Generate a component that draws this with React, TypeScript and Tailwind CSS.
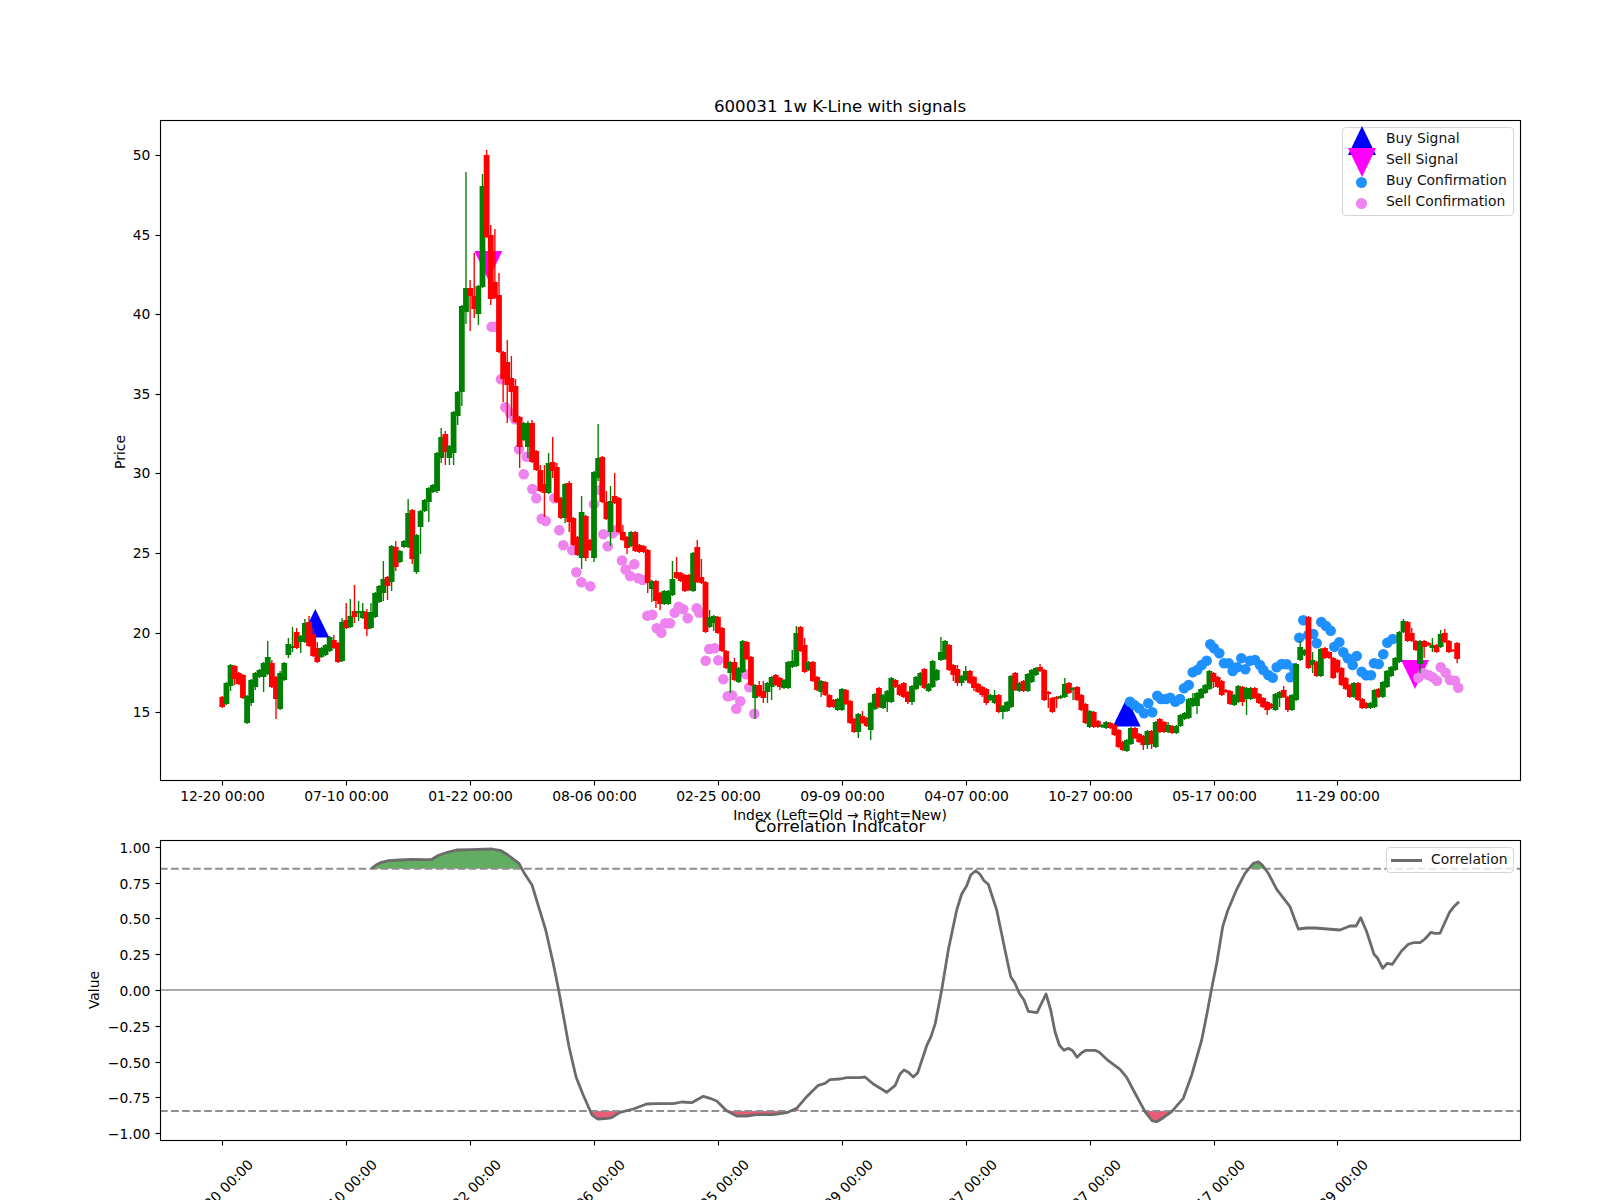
type Candle = { up: boolean; top: number; bot: number; hi: number; lo: number };

// all candle / curve numbers are page pixels
const g = (top: number, bot: number, hi = 0, lo = 0): Candle => ({ up: true, top, bot, hi: hi || top - 1, lo: lo || bot + 1 });
const r = (top: number, bot: number, hi = 0, lo = 0): Candle => ({ up: false, top, bot, hi: hi || top - 1, lo: lo || bot + 1 });

const candles: Candle[] = [
  // 12-20
  r(697,707,696,708), g(683,704), g(665,686,0,691), r(666,679,0,685), r(673,684), r(675,698,674,699), g(696,723), g(680,703,0,706), g(673,687,0,690), g(670,677),
  g(663,677,0,692), g(657,674,641), r(663,687,660), r(677,699,0,719), g(673,709,671,710), g(663,680), g(644,655,638,658), g(646,648,627,652), r(632,648,628,649), g(636,642,0,653),
  g(623,642,619), r(622,646,616,647), r(634,656,628), r(648,662,642,663), g(648,657), g(645,655), g(637,651), r(640,648,635), r(643,662), g(622,661,618,662),
  // 07-10
  r(620,628,603), g(616,627,599), r(611,617,585,623), g(611,613,601,621), g(611,618,603), r(612,629,609,636), g(612,628,603), g(593,617), g(586,602), g(579,593,561,601),
  r(577,586,0,600), g(546,582,0,591), r(547,567,541,571), g(551,562), g(541,547), g(513,547,499), r(510,559,0,564), g(535,572,0,574), g(511,527,0,554), g(500,511),
  g(488,502,0,522), g(485,492), g(453,491,0,493), g(437,458,428,463), r(434,452,431,465), g(446,458,0,465), g(412,453,0,465), g(392,416,0,425), g(306,392,0,406), g(288,312,172,324),
  // 01-22
  r(288,296,280,331), r(296,309,253,318), g(286,314,0,325), g(186,287,174), r(155,237,150), r(235,299,225,305), r(282,298,229), r(295,352,273), r(352,379,0,402), r(362,385,340,423),
  r(378,392,356,416), r(386,422,379), r(417,447,0,468), g(423,440), g(423,447,421,458), r(423,462,420), r(451,470), r(470,491,465), r(484,493,465,517), g(463,493,453),
  r(462,471,437,478), r(467,502,463), r(498,518), g(484,518,0,523), r(483,522,481,532), r(518,545), r(537,555), g(512,558,496,569), r(516,558,0,561), r(540,550),
  // 08-06
  g(472,558,0,562), g(458,478,424,481), r(457,502), r(502,519,491), g(501,532,486,546), r(496,503,473), r(498,532), r(532,540,525), r(537,548,0,554), g(532,546),
  r(532,551), r(545,552,0,553), r(546,552), r(550,583,0,593), g(581,589,0,602), r(581,601,0,608), r(593,604,0,610), g(591,604), g(591,604), g(579,595,561),
  r(572,578,557), r(573,581), r(575,591), r(575,590), g(553,591), r(547,582,540), r(577,583,559), r(582,632), g(617,627,610), g(616,623,0,631),
  // 02-25
  r(617,633), r(628,651), r(651,668), g(662,673,0,693), r(662,680,658), g(668,682), g(641,672), r(642,659), r(657,685), g(685,698,0,719),
  r(685,696,681), r(691,698,681,703), g(683,692,0,703), g(677,687,0,700), r(675,685), r(678,687,0,690), g(680,688), g(662,688), g(661,667,650), g(633,666,626),
  r(627,651), r(645,672,638), g(662,670), r(662,681), r(677,690), g(681,692,0,697), r(682,695), r(695,707), r(700,707), g(699,710),
  // 09-09
  g(689,710), r(690,704), r(701,723), r(719,732), g(714,732,0,738), r(716,723,711), r(718,726), g(703,730,0,740), g(694,709), r(688,707),
  g(695,708), g(691,702,0,712), g(678,702), r(680,687), r(685,695), r(683,697), r(692,702,0,704), g(686,702,0,705), g(677,689), g(673,685),
  r(669,688), g(684,691), g(661,687), g(670,680), g(652,660,637), g(641,659), r(645,670), r(665,675,0,681), r(669,683,665,686), g(676,683,0,686),
  // 04-07
  g(671,680,666), r(671,683), r(677,688,0,691), r(684,692), r(687,695,0,697), r(689,703,0,705), g(695,700), g(695,703,690), r(695,712), g(706,712,0,719),
  g(702,711), g(676,707), r(673,690), g(683,691), r(681,691), g(674,691), g(670,682), g(668,675), r(667,671,664), r(670,700),
  r(692,694,0,708), r(698,712), r(697,699,0,708), g(696,698), g(684,697,678,698), r(683,693), g(688,690,687,700), r(687,700), r(695,710), r(704,723),
  // 10-27
  g(711,727), r(712,727), r(721,727), g(725,727,724,728), g(722,728), r(723,728), r(725,735), r(730,747), r(742,750,0,751), g(740,751),
  g(728,744), r(728,738), r(734,742), r(736,745,0,750), g(731,745,0,749), r(731,744,0,749), g(722,747,0,748), r(719,732), r(722,732,0,733), g(725,732,722),
  r(726,733), g(726,733), g(715,726), g(713,719), g(699,718), g(698,706,693), g(693,706,0,714), g(689,698), g(685,693), g(671,689),
  // 05-17
  r(673,682,0,688), r(677,687), r(681,695), r(690,692), r(691,704), g(695,705), g(686,702), r(687,702,0,706), g(688,699,0,715), g(688,699),
  r(688,698), r(694,703), r(698,707), r(702,710,0,715), r(704,708), g(694,710), g(692,698,0,707), r(690,697,686), r(697,710,0,712), g(695,710),
  g(664,700), g(647,660,641), g(650,655), r(617,668), g(660,665,652,673), r(662,676), g(649,676), r(648,658), r(652,658), r(658,678),
  // 11-29
  r(660,672), r(668,685), r(678,689), r(685,697), g(683,697), r(683,700), r(699,708), r(703,708), g(703,708), g(690,707),
  r(689,697), g(682,697), g(671,687), g(667,676), g(658,670), g(632,662), g(621,632,619), r(622,641), r(633,641,628), r(641,650),
  g(641,664,0,673), r(641,647,0,658), r(643,645), g(645,648,638,652), r(645,652), g(634,647,630), r(633,642,629), r(641,652), r(650,651), r(643,659,0,663),
];

const candleX = (i: number) => 222.3 + i * 4.13;
const tickX = (i: number) => Math.round(candleX(i * 30)) + 0.5;

const tickLabels = ["12-20 00:00", "07-10 00:00", "01-22 00:00", "08-06 00:00", "02-25 00:00", "09-09 00:00", "04-07 00:00", "10-27 00:00", "05-17 00:00", "11-29 00:00"];
const priceTicks = [15, 20, 25, 30, 35, 40, 45, 50];
const valueTicks = ["1.00", "0.75", "0.50", "0.25", "0.00", "−0.25", "−0.50", "−0.75", "−1.00"];

const sellDots = [
  [491.7,326.7],[495,326.7],[501,379.3],[505.3,407.3],[510,413.3],[515,419.3],[519,449.3],[526.7,456.7],[523.7,474.3],[532.3,489],[536.3,498.3],[541.7,518.7],[545.7,521],[554.3,498.3],[559.3,530.3],[563.3,545.3],[572.3,550.3],[576.3,572.3],[581.3,582.3],[590.3,586.3],[594,504.3],[600,490],[603.3,534.3],[607.7,546.3],[612.7,533.3],[616.7,530],[622,560.5],[625.7,569.5],[630,576],[634.3,564.3],[638.3,578.3],[642.7,580],
  [647.3,615.7],[652.3,614.7],[656.7,628.3],[661.3,632.7],[665.3,623.3],[670,623.3],[674.7,612.7],[678.7,606.7],[683.3,609.3],[687.7,618.3],[696.7,608.3],[699.3,612.7],[705.7,660.7],[709.3,649],[714.7,648.3],[718.3,660.3],[723.3,679.3],[727.7,696.3],[732,695.3],[736.3,708.7],[740.3,701.3],[746,674.3],[749.3,687.3],[754.3,713.7],
  [1418.3,677.7],[1423.3,673.3],[1428.3,675],[1432.7,677.3],[1437,680.7],[1440.7,667.3],[1445.7,672.7],[1450,680],[1455,680.7],[1458.3,687.7],
];

const buyDots = [
  [1130,701.7],[1134.3,705],[1139,708.3],[1144,713.3],[1148.3,703.3],[1152.3,712.3],[1157.3,695.7],[1161,699],[1166,699],[1170.3,697.7],[1175.3,701.7],[1180,699],[1184,688.3],[1188.7,685],[1192.7,672.3],[1197.3,670],[1201.7,665],[1206.7,660.7],[1210.3,644.3],[1214,648.3],[1219.3,653.3],[1224,663.3],[1228.7,663.3],[1232.7,671],[1237,667.3],[1241.3,658.3],[1245.3,669.3],[1250,660.7],[1255,660],[1260,665],[1263.3,670],[1268.3,675],[1272.7,677.7],[1276.7,667.3],[1281.7,664],[1286.7,664.3],[1290.3,677.3],[1294,668.3],[1299.3,637.7],[1303.3,620.3],[1308.3,635],[1313.3,634],[1316.7,643.3],[1321.3,622],[1326,626],[1330.7,630.7],[1334.3,646.7],[1339.3,642.3],[1343.3,652.3],[1347.7,658.3],[1352.7,665],[1356.7,656],[1361.7,671.7],[1366,675.3],[1371,675.3],[1374,663.3],[1378.7,664],[1383.3,654.3],[1387.3,642.7],[1392.7,639],
];

const curve: [number, number][] = [
  [371.4,868.7],[376,865],[381.4,862.3],[388.6,860.7],[399.3,860],[411.8,859.3],[424.3,859.7],[432,859.3],[438.6,855.3],[447.5,852.3],[456.4,850],[470.7,849.7],[492,849],[501,850.7],[508,855],[519,863.3],[524.3,873.3],[532,885],[538.6,906.7],[545.7,930],[552.9,961.7],[558,986.7],[563.6,1016.7],[569,1046.7],[576,1076.7],[583.2,1095],[592,1115],[597.5,1119],[608,1118.3],[611.7,1117.7],[620,1112.3],[633.3,1109],[646.7,1104],[656.7,1103.7],[673.3,1103.7],[681.7,1102],[691.7,1102.7],[703.3,1096.3],[710,1098.3],[716.7,1101],[726.7,1110.7],[736.7,1116],[746.7,1116],[756.7,1114.7],[773.3,1114.7],[786.7,1112.7],[796.7,1108.3],[806.7,1096.7],[818.3,1085.3],[825,1083.3],[830,1079.7],[840,1079],[846.7,1077.7],[860,1077.7],[865,1077],[873.3,1084],[886.7,1092.3],[895,1085.7],[900,1074],[904,1070],[908.3,1072.3],[913.3,1077],[917.7,1072.7],[926.7,1045.7],[931,1036.7],[935.3,1023.3],[941.7,990],[948.3,950],[956.7,910],[961.7,894],[966.7,885.7],[970.7,875],[975.7,870.7],[980,874.3],[984,880.7],[988.3,884.3],[996.7,910],[1005,950],[1010.7,976.7],[1015,983.3],[1019.3,993.3],[1024,1000],[1028.3,1011.3],[1037,1012.7],[1046,994],[1050.7,1010],[1055,1031.7],[1059.3,1045],[1064,1050.3],[1068.3,1048.3],[1072.7,1050.7],[1077,1057.3],[1081.7,1052.7],[1086,1050.3],[1095,1050.3],[1099.3,1052.3],[1108.3,1060.7],[1120,1069.3],[1126.7,1077.3],[1133.3,1090],[1145,1111.7],[1152.3,1121],[1156.7,1121.7],[1163.3,1117.7],[1171.7,1111.7],[1183.3,1098.3],[1191.7,1075],[1201.7,1040],[1206.7,1015],[1211.7,988.3],[1216.7,963.3],[1222.7,926.7],[1227.7,910.7],[1236.7,889.3],[1245,873.3],[1253.3,863.3],[1258.3,861.7],[1262.3,865],[1268.3,873.3],[1276.7,889.3],[1290,906.7],[1298.3,929],[1306.7,928],[1315,928],[1340,930],[1350,926],[1356,926],[1360.7,917.7],[1366.7,931.7],[1374,954.3],[1377.7,958.3],[1382.7,968.3],[1387.3,963.3],[1392.3,964.3],[1401.7,950.7],[1408.3,944.3],[1413.3,942.7],[1420,942.7],[1425,939],[1431,932.3],[1435,933.3],[1440,933.3],[1449.3,912.7],[1453.3,907.3],[1459,901.7],
];

const pts = (list: number[][]) => list.map((p) => p.join(",")).join(" ");

// closed area between the curve and a threshold, for one x range
function area(x0: number, x1: number, level: number) {
  const inside = curve.filter((p) => p[0] >= x0 && p[0] <= x1);
  return pts([[x0, level], ...inside, [x1, level]]);
}

function Triangle({ x, y, down, color }: { x: number; y: number; down?: boolean; color: string }) {
  const p = down
    ? [[x - 14, y], [x + 14, y], [x, y + 29]]
    : [[x, y], [x + 14, y + 28.5], [x - 14, y + 28.5]];
  return <polygon points={pts(p)} fill={color} />;
}

function PriceChart() {
  return (
    <svg viewBox="0 0 1600 800" className="block h-[800px] w-[1600px] overflow-visible">
      <text x={840} y={111.5} textAnchor="middle" className="text-[16.67px]">600031 1w K-Line with signals</text>

      <Triangle x={315.3} y={609} color="#0000ff" />
      <Triangle x={1126.7} y={698} color="#0000ff" />
      <Triangle x={488.3} y={251} down color="#ff00ff" />
      <Triangle x={1415} y={660} down color="#ff00ff" />

      {buyDots.map((d, i) => <circle key={i} cx={d[0]} cy={d[1]} r={5.3} fill="#1e90ff" />)}
      {sellDots.map((d, i) => <circle key={i} cx={d[0]} cy={d[1]} r={5.3} fill="#ee82ee" />)}

      {candles.map((c, i) => {
        const x = candleX(i);
        const color = c.up ? "#008000" : "#ff0000";
        return (
          <g key={i} stroke={color}>
            <line x1={x} x2={x} y1={c.hi} y2={c.lo} strokeWidth={1.39} />
            <line x1={x} x2={x} y1={c.top} y2={c.bot} strokeWidth={5.8} />
          </g>
        );
      })}

      <rect x={160.5} y={120.5} width={1360} height={660} fill="none" stroke="#000" strokeWidth={1.11} />

      {priceTicks.map((p) => {
        const y = Math.round(155 + (50 - p) * 15.92) + 0.5;
        return (
          <g key={p}>
            <line x1={155.5} x2={160} y1={y} y2={y} stroke="#000" strokeWidth={1.11} />
            <text x={150.3} y={y + 4.7} textAnchor="end" className="text-[13.89px]">{p}</text>
          </g>
        );
      })}
      {tickLabels.map((t, i) => {
        const x = tickX(i);
        return (
          <g key={t}>
            <line x1={x} x2={x} y1={781} y2={785.5} stroke="#000" strokeWidth={1.11} />
            <text x={x} y={801} textAnchor="middle" className="text-[13.89px]">{t}</text>
          </g>
        );
      })}
      <text x={840} y={820} textAnchor="middle" className="text-[13.89px]">Index (Left=Old → Right=New)</text>
      <text transform="translate(125 452) rotate(-90)" textAnchor="middle" className="text-[13.89px]">Price</text>
    </svg>
  );
}

function CorrelationChart() {
  return (
    <svg viewBox="0 800 1600 400" className="block h-[400px] w-[1600px]">
      <text x={840} y={831.7} textAnchor="middle" className="text-[16.67px]">Correlation Indicator</text>

      <polygon points={area(371.4, 521, 868.7)} fill="#62ad62" />
      <polygon points={area(1248.5, 1266.8, 868.7)} fill="#62ad62" />
      <polygon points={area(590, 622, 1111)} fill="#e75c77" />
      <polygon points={area(726, 800, 1111)} fill="#e75c77" />
      <polygon points={area(1144.5, 1171.7, 1111)} fill="#e75c77" />

      <line x1={160} x2={1520} y1={990} y2={990} stroke="#aaaaaa" strokeWidth={2} />
      <line x1={160} x2={1520} y1={868.7} y2={868.7} stroke="#8f8f8f" strokeWidth={2.08} strokeDasharray="7.7 3.33" />
      <line x1={160} x2={1520} y1={1111} y2={1111} stroke="#8f8f8f" strokeWidth={2.08} strokeDasharray="7.7 3.33" />
      <polyline points={pts(curve)} fill="none" stroke="#6b6b6b" strokeWidth={2.78} strokeLinejoin="round" />

      <rect x={160.5} y={840.5} width={1360} height={300} fill="none" stroke="#000" strokeWidth={1.11} />

      {valueTicks.map((v, i) => {
        const y = Math.round(846.8 + i * 35.8) + 0.5;
        return (
          <g key={v}>
            <line x1={155.5} x2={160} y1={y} y2={y} stroke="#000" strokeWidth={1.11} />
            <text x={150.3} y={y + 5} textAnchor="end" className="text-[13.89px]">{v}</text>
          </g>
        );
      })}
      {tickLabels.map((t, i) => {
        const x = tickX(i);
        return (
          <g key={t}>
            <line x1={x} x2={x} y1={1141} y2={1145.5} stroke="#000" strokeWidth={1.11} />
            <text transform={`translate(${x - 2} 1192) rotate(-45)`} y={5} textAnchor="middle" className="text-[13.89px]">{t}</text>
          </g>
        );
      })}
      <text transform="translate(99 990) rotate(-90)" textAnchor="middle" className="text-[13.89px]">Value</text>
    </svg>
  );
}

function LegendRow({ label, marker }: { label: string; marker: React.ReactNode }) {
  return (
    <div className="flex h-[21px] items-center">
      <div className="mt-[4px] flex h-[21px] w-[37px] items-center justify-center">{marker}</div>
      <span className="ml-[6px] whitespace-nowrap">{label}</span>
    </div>
  );
}

function TriangleMarker({ down, color }: { down?: boolean; color: string }) {
  return (
    <svg width="30" height="30" viewBox="0 0 30 30" className="shrink-0 overflow-visible">
      <polygon points={down ? "1,1 29,1 15,30" : "15,0 29,29 1,29"} fill={color} />
    </svg>
  );
}

export default function App() {
  return (
    <div className="h-[1200px] w-[1600px] overflow-hidden bg-white font-['DejaVu_Sans',sans-serif] text-[13.89px] leading-none text-black">
      <section className="relative h-[800px]">
        <PriceChart />
        <div className="absolute left-[1342px] top-[127px] h-[89px] w-[172px] rounded-[4px] border border-[#d5d5d5] bg-white/80 text-[#111]">
          <LegendRow label="Buy Signal" marker={<TriangleMarker color="#0000ff" />} />
          <LegendRow label="Sell Signal" marker={<TriangleMarker down color="#ff00ff" />} />
          <LegendRow label="Buy Confirmation" marker={<span className="h-[11px] w-[11px] rounded-full bg-[#1e90ff]" />} />
          <LegendRow label="Sell Confirmation" marker={<span className="h-[11px] w-[11px] rounded-full bg-[#ee82ee]" />} />
        </div>
      </section>
      <section className="relative h-[400px]">
        <CorrelationChart />
        <div className="absolute left-[1386px] top-[47px] flex h-[26px] w-[128px] items-center rounded-[4px] border border-[#d5d5d5] bg-white/80 pl-[4px] text-[#111]">
          <span className="h-[3px] w-[31px] bg-[#6b6b6b]" />
          <span className="ml-[9px]">Correlation</span>
        </div>
      </section>
    </div>
  );
}
